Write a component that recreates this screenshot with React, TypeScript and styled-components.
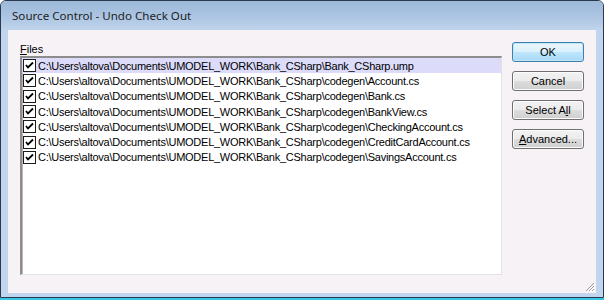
import React, { useState } from 'react';
import styled, { createGlobalStyle } from 'styled-components';

const GlobalStyle = createGlobalStyle`
  html, body {
    margin: 0;
    padding: 0;
    background: #ffffff;
  }
  * { box-sizing: border-box; }
`;

const Screen = styled.div`
  width: 604px;
  height: 300px;
  display: flex;
  flex-direction: column;
  background: #ffffff;
`;

const Window = styled.div`
  width: 604px;
  height: 298px;
  display: flex;
  flex-direction: column;
  border: 1px solid #2a3a4c;
  border-radius: 6px 6px 0 0;
  background: #c1d5ee;
  overflow: hidden;
`;

const BottomStrip = styled.div`
  height: 2px;
  background: #38c6e6;
`;

const TitleBar = styled.div`
  height: 29px;
  flex: none;
  display: flex;
  align-items: center;
  padding: 0 0 1px 11px;
  background: linear-gradient(#9db9d9 0%, #aac4e2 50%, #c0d4ec 100%);
  font-family: "Noto Sans", "DejaVu Sans", sans-serif;
  font-size: 11.6px;
  color: #1e1e1e;
`;

const Client = styled.div`
  flex: 1;
  margin: 0 7px 4px 7px;
  background: #f6f2f6;
  display: flex;
  padding: 12px 12px 18px 12px;
  gap: 10px;
  position: relative;
  font-family: "Liberation Sans", Arial, sans-serif;
  font-size: 11px;
  color: #000;
`;

const FilesPane = styled.div`
  flex: 1;
  display: flex;
  flex-direction: column;
`;

const Label = styled.div`
  height: 14px;
  padding-top: 1px;
`;

const U = styled.span`
  text-decoration: underline;
`;

const ListBox = styled.div`
  flex: 1;
  background: #ffffff;
  border-style: solid;
  border-width: 2px 1px 1px 2px;
  border-color: #8d8d8d #e2e2e2 #e2e2e2 #8d8d8d;
  box-shadow: inset 1px 1px 0 #b8b8b8;
  display: flex;
  flex-direction: column;
`;

const Row = styled.div<{ $selected?: boolean }>`
  height: 15.3px;
  display: flex;
  align-items: center;
  padding-left: 1px;
  gap: 2px;
  background: ${(p) => (p.$selected ? '#dcdcfa' : 'transparent')};
  white-space: nowrap;
  letter-spacing: -0.25px;
`;

const Check = styled.span`
  width: 13px;
  height: 13px;
  flex: none;
  border: 1px solid #1c1c1c;
  background: #ffffff;
  display: flex;
  align-items: center;
  justify-content: center;
`;

const Buttons = styled.div`
  width: 72px;
  display: flex;
  flex-direction: column;
  gap: 9px;
`;

const Button = styled.button<{ $default?: boolean }>`
  height: 20px;
  width: 72px;
  padding: 0;
  border-radius: 3px;
  border: 1px solid ${(p) => (p.$default ? '#3c7fb1' : '#707070')};
  background: ${(p) =>
    p.$default
      ? 'linear-gradient(#eaf6fd 0%, #d9f0fc 50%, #bee6fd 51%, #a7d9f5 100%)'
      : 'linear-gradient(#f2f2f2 0%, #ebebeb 50%, #dddddd 51%, #cfcfcf 100%)'};
  box-shadow: inset 0 0 0 1px ${(p) => (p.$default ? '#c2e6f8' : '#fcfcfc')};
  font-family: "Liberation Sans", Arial, sans-serif;
  font-size: 11px;
  color: #000;
  cursor: default;
`;

const Grip = styled.svg`
  position: absolute;
  right: 1px;
  bottom: 1px;
`;

const files = [
  'C:\\Users\\altova\\Documents\\UMODEL_WORK\\Bank_CSharp\\Bank_CSharp.ump',
  'C:\\Users\\altova\\Documents\\UMODEL_WORK\\Bank_CSharp\\codegen\\Account.cs',
  'C:\\Users\\altova\\Documents\\UMODEL_WORK\\Bank_CSharp\\codegen\\Bank.cs',
  'C:\\Users\\altova\\Documents\\UMODEL_WORK\\Bank_CSharp\\codegen\\BankView.cs',
  'C:\\Users\\altova\\Documents\\UMODEL_WORK\\Bank_CSharp\\codegen\\CheckingAccount.cs',
  'C:\\Users\\altova\\Documents\\UMODEL_WORK\\Bank_CSharp\\codegen\\CreditCardAccount.cs',
  'C:\\Users\\altova\\Documents\\UMODEL_WORK\\Bank_CSharp\\codegen\\SavingsAccount.cs',
];

const CheckMark = () => (
  <svg width="9" height="9" viewBox="0 0 9 9">
    <path d="M1 4 L3 6.5 L8 1.5" fill="none" stroke="#000" strokeWidth="1.8" />
  </svg>
);

const App: React.FC = () => {
  const [selected] = useState(0);

  return (
    <Screen>
      <GlobalStyle />
      <Window>
        <TitleBar>Source Control - Undo Check Out</TitleBar>
        <Client>
          <FilesPane>
            <Label>
              <U>F</U>iles
            </Label>
            <ListBox>
              {files.map((f, i) => (
                <Row key={f} $selected={i === selected}>
                  <Check>
                    <CheckMark />
                  </Check>
                  <span>{f}</span>
                </Row>
              ))}
            </ListBox>
          </FilesPane>
          <Buttons>
            <Button $default>OK</Button>
            <Button>Cancel</Button>
            <Button>
              Select A<U>l</U>l
            </Button>
            <Button>
              <U>A</U>dvanced...
            </Button>
          </Buttons>
          <Grip width="11" height="11" viewBox="0 0 11 11">
            <path d="M10 2 L2 10 M10 5 L5 10 M10 8 L8 10" stroke="#9a9a9a" strokeWidth="1" />
            <path d="M11 3 L3 11 M11 6 L6 11 M11 9 L9 11" stroke="#ffffff" strokeWidth="1" />
          </Grip>
        </Client>
      </Window>
      <BottomStrip />
    </Screen>
  );
};

export default App;
